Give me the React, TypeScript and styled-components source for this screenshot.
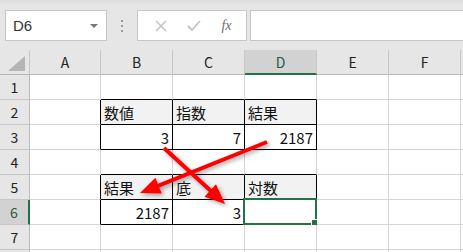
import React from 'react'
import styled, { createGlobalStyle } from 'styled-components'

const GlobalStyle = createGlobalStyle`
  body {
    margin: 0;
    background: #ffffff;
    font-family: "Noto Sans CJK JP", "Noto Sans", sans-serif;
  }
`

const GREEN = '#217346'
const GRID = '#d4d4d4'
const COLS = ['A', 'B', 'C', 'D', 'E', 'F', 'G']
const COL_WIDTHS = [71, 72, 72, 72, 72, 72, 40]

type CellData = { text?: string; align?: 'left' | 'right'; head?: boolean }

// row -> col -> data
const data: Record<number, Record<string, CellData>> = {
  2: { B: { text: '数値', head: true }, C: { text: '指数', head: true }, D: { text: '結果', head: true } },
  3: { B: { text: '3', align: 'right' }, C: { text: '7', align: 'right' }, D: { text: '2187', align: 'right' } },
  5: { B: { text: '結果', head: true }, C: { text: '底', head: true }, D: { text: '対数', head: true } },
  6: { B: { text: '2187', align: 'right' }, C: { text: '3', align: 'right' }, D: {} },
}

const inTable = (row: number, col: number) =>
  (row === 2 || row === 3 || row === 5 || row === 6) && col >= 1 && col <= 3

const Window = styled.div`
  position: relative;
  width: 463px;
  height: 252px;
  overflow: hidden;
  background: #ffffff;
`

const TopBar = styled.div`
  height: 50px;
  box-sizing: border-box;
  display: flex;
  align-items: flex-start;
  padding: 10px 0 0 5px;
  background: linear-gradient(#dcdcdc 0px, #e6e6e6 5px, #e6e6e6 100%);
`

const NameBox = styled.div`
  width: 102px;
  height: 31px;
  box-sizing: border-box;
  background: #ffffff;
  border: 1px solid #c6c6c6;
  display: flex;
  align-items: center;
  justify-content: space-between;
  padding: 0 8px 0 7px;
  font-family: "Liberation Sans", sans-serif;
  font-size: 15px;
  color: #333;
`

const Caret = styled.span`
  width: 0;
  height: 0;
  border-left: 4px solid transparent;
  border-right: 4px solid transparent;
  border-top: 4px solid #777;
`

const Grip = styled.div`
  width: 30px;
  height: 31px;
  display: flex;
  flex-direction: column;
  align-items: center;
  justify-content: center;
  gap: 3px;
  span {
    width: 2px;
    height: 2px;
    background: #9a9a9a;
  }
`

const ControlBox = styled.div`
  width: 110px;
  height: 31px;
  box-sizing: border-box;
  background: #ffffff;
  border: 1px solid #c6c6c6;
  display: flex;
  align-items: center;
  padding: 0 8px 0 12px;
`

const Control = styled.span<{ $w: number }>`
  width: ${p => p.$w}px;
  display: flex;
  justify-content: center;
`

const Fx = styled.span`
  font-family: "Liberation Serif", serif;
  font-style: italic;
  font-size: 14px;
  color: #6e6e6e;
`

const FormulaInput = styled.div`
  flex: 1;
  height: 31px;
  margin-left: 3px;
  box-sizing: border-box;
  background: #ffffff;
  border: 1px solid #c6c6c6;
  border-right: none;
`

const Sheet = styled.div`
  display: grid;
  grid-template-columns: 30px ${COL_WIDTHS.map(w => `${w}px`).join(' ')};
  grid-auto-rows: 25px;
`

const Corner = styled.div`
  position: relative;
  background: #e6e6e6;
  border-right: 1px solid #c6c6c6;
  border-bottom: 1px solid #b8b8b8;
  &::after {
    content: '';
    position: absolute;
    right: 4px;
    bottom: 3px;
    width: 0;
    height: 0;
    border-left: 17px solid transparent;
    border-bottom: 15px solid #b4b4b4;
  }
`

const ColHead = styled.div<{ $sel?: boolean }>`
  background: ${p => (p.$sel ? '#d2d2d2' : '#e6e6e6')};
  border-right: 1px solid #c6c6c6;
  border-bottom: ${p => (p.$sel ? `2px solid ${GREEN}` : '1px solid #b8b8b8')};
  display: flex;
  align-items: center;
  justify-content: center;
  font-size: 14px;
  color: ${p => (p.$sel ? '#1f5c3d' : '#222')};
`

const RowHead = styled.div<{ $sel?: boolean }>`
  background: ${p => (p.$sel ? '#d2d2d2' : '#e6e6e6')};
  border-right: ${p => (p.$sel ? `2px solid ${GREEN}` : '1px solid #b8b8b8')};
  border-bottom: 1px solid #c6c6c6;
  display: flex;
  align-items: center;
  justify-content: center;
  font-size: 14px;
  color: ${p => (p.$sel ? '#1f5c3d' : '#222')};
`

const Cell = styled.div<{ $right: string; $bottom: string; $head?: boolean; $align?: string }>`
  position: relative;
  background: ${p => (p.$head ? '#f2f2f2' : '#ffffff')};
  border-right: 1px solid ${p => p.$right};
  border-bottom: 1px solid ${p => p.$bottom};
  display: flex;
  align-items: center;
  justify-content: ${p => (p.$align === 'right' ? 'flex-end' : 'flex-start')};
  padding: 1px 3px 0 3px;
  font-size: 15px;
  color: #111;
  white-space: nowrap;
`

const Selection = styled.div`
  position: absolute;
  top: -2px;
  left: -2px;
  right: -1px;
  bottom: -1px;
  border: 2px solid ${GREEN};
  &::after {
    content: '';
    position: absolute;
    right: -4px;
    bottom: -4px;
    width: 6px;
    height: 6px;
    background: ${GREEN};
    border: 1px solid #ffffff;
  }
`

const Overlay = styled.svg`
  position: absolute;
  left: 0;
  top: 0;
  pointer-events: none;
`

const Arrow = ({ x1, y1, x2, y2 }: { x1: number; y1: number; x2: number; y2: number }) => {
  const dx = x2 - x1
  const dy = y2 - y1
  const len = Math.hypot(dx, dy)
  const ux = dx / len
  const uy = dy / len
  const headLen = 20
  const half = 8.5
  const bx = x2 - ux * headLen
  const by = y2 - uy * headLen
  const pts = `${x2},${y2} ${bx - uy * half},${by + ux * half} ${bx + uy * half},${by - ux * half}`
  return (
    <g>
      <line x1={x1} y1={y1} x2={bx + ux * 2} y2={by + uy * 2} stroke="#ff0000" strokeWidth={4} />
      <polygon points={pts} fill="#ff0000" />
    </g>
  )
}

const X = () => (
  <svg width="12" height="12" viewBox="0 0 12 12">
    <path d="M1 1 L11 11 M11 1 L1 11" stroke="#c4c4c4" strokeWidth="1.6" />
  </svg>
)

const Check = () => (
  <svg width="14" height="12" viewBox="0 0 14 12">
    <path d="M1 6 L5 10 L13 1" stroke="#c4c4c4" strokeWidth="1.8" fill="none" />
  </svg>
)

export default function App() {
  const rows = [1, 2, 3, 4, 5, 6, 7, 8]
  return (
    <Window>
      <GlobalStyle />
      <TopBar>
        <NameBox>
          D6
          <Caret />
        </NameBox>
        <Grip>
          <span />
          <span />
          <span />
        </Grip>
        <ControlBox>
          <Control $w={24}>
            <X />
          </Control>
          <Control $w={44}>
            <Check />
          </Control>
          <Control $w={24}>
            <Fx>fx</Fx>
          </Control>
        </ControlBox>
        <FormulaInput />
      </TopBar>
      <Sheet>
        <Corner />
        {COLS.map(c => (
          <ColHead key={c} $sel={c === 'D'}>
            {c === 'G' ? '' : c}
          </ColHead>
        ))}
        {rows.map(r => (
          <React.Fragment key={r}>
            {/* row 8 only peeks in at the bottom edge, so no label */}
            <RowHead $sel={r === 6}>{r < 8 ? r : ''}</RowHead>
            {COLS.map((c, ci) => {
              const d = data[r]?.[c] || {}
              const right = inTable(r, ci) || inTable(r, ci + 1) ? '#000' : GRID
              const bottom = inTable(r, ci) || inTable(r + 1, ci) ? '#000' : GRID
              return (
                <Cell key={c} $right={right} $bottom={bottom} $head={d.head} $align={d.align}>
                  {d.text}
                  {r === 6 && c === 'D' && <Selection />}
                </Cell>
              )
            })}
          </React.Fragment>
        ))}
      </Sheet>
      <Overlay width="463" height="252">
        <defs>
          <filter id="shadow" x="-20%" y="-20%" width="140%" height="140%">
            <feDropShadow dx="2" dy="2" stdDeviation="2" floodColor="#000" floodOpacity="0.35" />
          </filter>
        </defs>
        <g filter="url(#shadow)">
          <Arrow x1={164} y1={148} x2={225} y2={204} />
          <Arrow x1={267} y1={142} x2={140} y2={193} />
        </g>
      </Overlay>
    </Window>
  )
}
